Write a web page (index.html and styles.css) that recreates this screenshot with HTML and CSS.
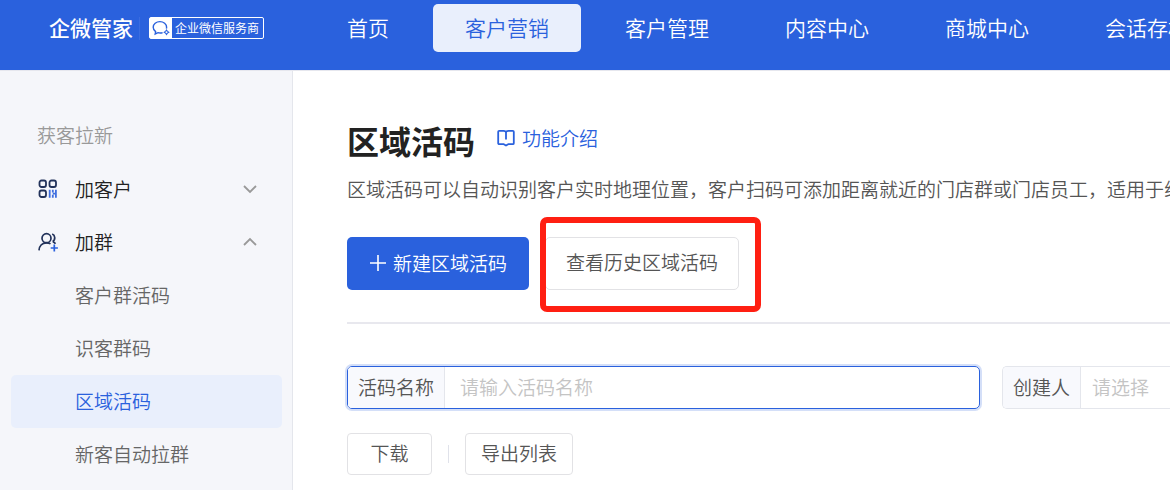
FILE: index.html
```html
<!DOCTYPE html>
<html lang="zh-CN">
<head>
    <meta charset="UTF-8">
    <meta name="viewport" content="width=device-width, initial-scale=1.0">
    <title>区域活码</title>
    <link rel="stylesheet" href="styles.css">
</head>
<body>
    <header class="header">
        <div class="brand">
            <span class="brand-name">企微管家</span>
            <span class="brand-badge">
                <svg class="badge-icon" viewBox="0 0 22 20" fill="none" stroke="#2a61dd" stroke-width="1.4">
                    <path d="M12.6 14.6c-1.3.5-3.1.6-4.6.1L5.2 16l.4-2.400C4 12.400 3.200 10.900 3.200 9.200 3.200 6 6.200 3.600 9.900 3.600s6.700 2.400 6.700 5.600c0 .5-.1 1-.2 1.400"/>
                    <path d="M16.500 11l1.300 2 2 1.300-2 1.300-1.300 2-1.300-2-2-1.300 2-1.300z" fill="#2a61dd" stroke="none"/>
                    <circle cx="16.500" cy="14.300" r="1" fill="#fff" stroke="none"/>
                </svg>
                <span class="badge-text">企业微信服务商</span>
            </span>
        </div>
        <nav class="nav">
            <a href="#">首页</a>
            <a href="#" class="active">客户营销</a>
            <a href="#">客户管理</a>
            <a href="#">内容中心</a>
            <a href="#">商城中心</a>
            <a href="#">会话存档</a>
        </nav>
    </header>
    <div class="layout">
        <aside class="sidebar">
            <h2 class="menu-title">获客拉新</h2>
            <button type="button" class="menu-item">
                <svg class="menu-icon" viewBox="0 0 20 20" fill="none" stroke="#22325a" stroke-width="1.8">
                    <rect x="1.5" y="1.5" width="6.500" height="6.500" rx="2"/>
                    <rect x="11.500" y="1.500" width="6.500" height="6.500" rx="2"/>
                    <rect x="1.500" y="11.500" width="6.500" height="6.500" rx="2"/>
                    <path d="M11.700 10.800v8M14.800 10.800v2.800M14.800 15.800v3M17.900 10.800v8M14.800 14.700h3" stroke="#3f6fe0"/>
                </svg>
                <span>加客户</span>
                <svg class="arrow" viewBox="0 0 14 14" fill="none" stroke="#999" stroke-width="1.8"><path d="M1 4l6 6 6-6"/></svg>
            </button>
            <button type="button" class="menu-item">
                <svg class="menu-icon" viewBox="0 0 20 20" fill="none" stroke="#22325a" stroke-width="1.7">
                    <circle cx="8.500" cy="6.200" r="4.500"/>
                    <path d="M1 18.400c.3-4.600 3.300-7.500 7.500-7.500 1.600 0 2.900.3 4 1M14.200 2c3 1.200 3.600 5.600.4 7.600M14.800 9.800c1.200.4 2 1 2.700 1.900"/>
                    <path d="M16.300 12.400v7.200M12.700 16h7.200" stroke="#2a61dd"/>
                </svg>
                <span>加群</span>
                <svg class="arrow" viewBox="0 0 14 14" fill="none" stroke="#999" stroke-width="1.8"><path d="M1 10l6-6 6 6"/></svg>
            </button>
            <div class="submenu">
                <a href="#">客户群活码</a>
                <a href="#">识客群码</a>
                <a href="#" class="active">区域活码</a>
                <a href="#">新客自动拉群</a>
            </div>
        </aside>
        <main class="main">
            <div class="title-row">
                <h1>区域活码</h1>
                <a href="#" class="intro">
                    <svg class="intro-icon" viewBox="0 0 18 18" fill="none" stroke="#2a61dd" stroke-width="1.8" stroke-linejoin="round">
                        <path d="M2.200 1.800h4.300C8 1.800 9 2.500 9 3.500c0-1 1-1.700 2.500-1.700h4.300c.6 0 1 .4 1 1v11.400c0 .6-.4 1-1 1h-4.600L9 16.600l-2.200-1.400H2.200c-.6 0-1-.4-1-1V2.800c0-.6.4-1 1-1zM9 3.500v7"/>
                    </svg>
                    <span>功能介绍</span>
                </a>
            </div>
            <p class="desc">区域活码可以自动识别客户实时地理位置，客户扫码可添加距离就近的门店群或门店员工，适用于线下</p>
            <div class="actions">
                <button type="button" class="btn-primary">
                    <svg class="plus" viewBox="0 0 18 18" stroke="#fff" stroke-width="1.6"><path d="M9 1v16M1 9h16"/></svg>
                    <span>新建区域活码</span>
                </button>
                <div class="marked">
                    <button type="button" class="btn-history">查看历史区域活码</button>
                </div>
            </div>
            <form class="filters">
                <div class="field focused">
                    <label for="codeName">活码名称</label>
                    <input type="text" id="codeName" placeholder="请输入活码名称">
                </div>
                <div class="field creator">
                    <label for="creator">创建人</label>
                    <select id="creator">
                        <option>请选择</option>
                    </select>
                </div>
            </form>
            <div class="tools">
                <button type="button">下载</button>
                <span class="split"></span>
                <button type="button">导出列表</button>
            </div>
        </main>
    </div>
</body>
</html>
```

FILE: styles.css
```css
* {
    box-sizing: border-box;
}
body {
    margin: 0;
    min-height: 100vh;
    display: flex;
    flex-direction: column;
    overflow: hidden;
    font-family: "Noto Sans CJK SC", sans-serif;
    font-size: 19px;
    font-weight: 350;
    line-height: 28px;
    color: #555;
    background: #fff;
}
a {
    color: inherit;
    text-decoration: none;
}
button, input, select {
    font: inherit;
    color: inherit;
}
button {
    cursor: pointer;
}

/* top bar */
.header {
    display: flex;
    height: 70px;
    padding-top: 4px;
    background: #2a61dd;
    color: #fff;
}
.brand {
    flex: 0 0 315px;
    display: flex;
    align-items: center;
    height: 48px;
    padding-left: 49px;
}
.brand-name {
    padding-right: 6px;
    padding-bottom: 3px;
    border-right: 1px solid #3a6ce0;
    font-size: 21px;
    font-weight: 500;
    line-height: 20px;
}
.brand-badge {
    display: flex;
    align-items: center;
    height: 22px;
    margin-left: 9px;
    border: 1px solid #fff;
    border-radius: 2px;
}
.badge-icon {
    width: 22px;
    height: 20px;
    background: #fff;
}
.badge-text {
    padding: 0 4px 0 3px;
    font-size: 12px;
    font-weight: 400;
    line-height: 20px;
}
.nav {
    flex: 1;
    display: flex;
    gap: 12px;
    overflow: hidden;
}
.nav a {
    flex: none;
    height: 48px;
    padding: 0 32px;
    border-radius: 5px;
    font-size: 21px;
    line-height: 46px;
}
.nav .active {
    background: #e9effc;
    color: #2a61dd;
}

.layout {
    flex: 1;
    display: flex;
    border-top: 1px solid #e6e7ee;
}

/* side menu */
.sidebar {
    flex: 0 0 293px;
    padding: 50px 10px 0 11px;
    border-right: 1px solid #e4e6ec;
    background: #f5f6fa;
}
.menu-title {
    margin: 0 0 13px;
    padding-left: 26px;
    font-size: 19px;
    font-weight: 350;
    line-height: 28px;
    color: #999;
}
.menu-item {
    display: flex;
    align-items: center;
    width: 100%;
    height: 53px;
    padding: 0 25px 0 27px;
    border: 0;
    background: none;
    color: #222;
}
.menu-icon {
    width: 20px;
    height: 20px;
    margin-right: 17px;
}
.arrow {
    width: 14px;
    height: 14px;
    margin-left: auto;
}
.submenu {
    padding-top: 1px;
}
.submenu a {
    display: block;
    padding: 0 0 1px 64px;
    border-radius: 5px;
    line-height: 52px;
    color: #666;
}
.submenu .active {
    background: #e9effc;
    color: #2a61dd;
}

/* content */
.main {
    flex: 1;
    min-width: 0;
    padding: 45px 0 0 54px;
}
.title-row {
    display: flex;
    align-items: center;
    gap: 22px;
}
h1 {
    margin: 0;
    font-size: 32px;
    font-weight: 700;
    line-height: 48px;
    color: #222;
}
.intro {
    display: flex;
    align-items: center;
    gap: 7px;
    padding-bottom: 4px;
    color: #2a61dd;
}
.intro-icon {
    width: 18px;
    height: 18px;
}
.desc {
    margin: 11px 0 34px;
    overflow: hidden;
    white-space: nowrap;
}
.actions {
    display: flex;
    gap: 16px;
    padding-bottom: 32px;
    border-bottom: 2px solid #e8e8ee;
}
.btn-primary {
    display: flex;
    align-items: center;
    gap: 6px;
    height: 53px;
    padding: 0 22px 2px;
    border: 0;
    border-radius: 5px;
    background: #2a61dd;
    color: #fff;
}
.plus {
    width: 18px;
    height: 18px;
}
.marked {
    position: relative;
}
/* red frame drawn over the history button */
.marked::after {
    content: "";
    position: absolute;
    top: -20px;
    right: -22px;
    bottom: -22px;
    left: -5px;
    border: 6px solid #ff1f12;
    border-radius: 7px;
    pointer-events: none;
}
.btn-history {
    height: 53px;
    padding: 0 20px 4px;
    border: 1px solid #e2e2e5;
    border-radius: 5px;
    background: #fff;
}
.filters {
    display: flex;
    gap: 22px;
    margin-top: 42px;
}
.field {
    flex: 1;
    display: flex;
    height: 43px;
    border: 1px solid #e4e6ec;
    border-radius: 5px;
}
.field label {
    flex: none;
    padding: 0 10px;
    border-right: 1px solid #e4e6ec;
    border-radius: 4px 0 0 4px;
    background: #f8f9fd;
    line-height: 39px;
}
.field input, .field select {
    flex: 1;
    min-width: 0;
    padding: 0 15px 2px;
    border: 0;
    outline: 0;
    appearance: none;
    background: none;
}
.field input::placeholder {
    color: #c4c4c4;
}
.field select {
    padding: 0 11px 2px;
    color: #c4c4c4;
}
.focused {
    border-color: #2a61dd;
    box-shadow: 0 0 0 2px #d4dff8;
}
.creator {
    flex: 0 0 168px;
    border-right: 0;
    border-radius: 5px 0 0 5px;
}
.tools {
    display: flex;
    align-items: center;
    gap: 16px;
    margin-top: 24px;
}
.tools button {
    min-width: 85px;
    height: 42px;
    padding: 0 15px 2px;
    border: 1px solid #e2e2e5;
    border-radius: 4px;
    background: #fff;
}
.split {
    width: 1px;
    height: 18px;
    background: #e0e2ea;
}
```
